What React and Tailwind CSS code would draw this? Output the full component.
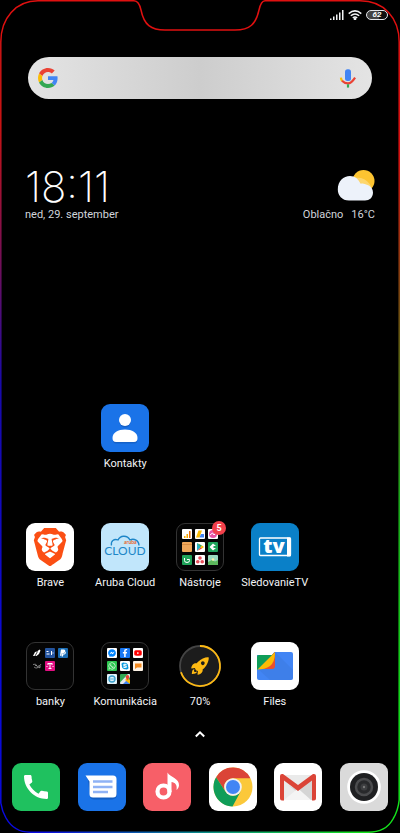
import React from "react";
import clsx from "clsx";
import { SiBrave } from "react-icons/si";
import { IoRocketSharp } from "react-icons/io5";
import { MdCall } from "react-icons/md";
import {
  FaFacebookMessenger,
  FaFacebookF,
  FaYoutube,
  FaWhatsapp,
  FaSkype,
  FaPaypal,
} from "react-icons/fa";

const svgProps = { viewBox: "0 0 48 48", className: "w-full h-full" };

function EdgeGlow() {
  return (
    <svg
      viewBox="0 0 400 833"
      preserveAspectRatio="none"
      className="absolute inset-0 w-full h-full pointer-events-none"
      fill="none"
      strokeWidth="1.5"
      aria-hidden="true"
    >
      <defs>
        <linearGradient id="edgeLeft" gradientUnits="userSpaceOnUse" x1="0" y1="0" x2="0" y2="833">
          <stop offset="0.15" stopColor="#d01414" />
          <stop offset="0.32" stopColor="#74105e" />
          <stop offset="0.46" stopColor="#1a0ab0" />
          <stop offset="0.8" stopColor="#0a0ae0" />
        </linearGradient>
        <linearGradient id="edgeRight" gradientUnits="userSpaceOnUse" x1="0" y1="0" x2="0" y2="833">
          <stop offset="0.18" stopColor="#e01010" />
          <stop offset="0.36" stopColor="#7c4a10" />
          <stop offset="0.6" stopColor="#1cae1c" />
          <stop offset="0.85" stopColor="#14e01c" />
        </linearGradient>
        <linearGradient id="edgeBottom" gradientUnits="userSpaceOnUse" x1="0" y1="0" x2="400" y2="0">
          <stop offset="0.1" stopColor="#0a0ae0" />
          <stop offset="0.5" stopColor="#0a8a8a" />
          <stop offset="0.9" stopColor="#14e01c" />
        </linearGradient>
      </defs>
      <path
        stroke="#e01010"
        d="M.8 42C.8 18 16 .8 38 .8H134Q139 1 141 10C144 25 151 30 165 30H235C250 30 256 24 259 10Q261 1 265 .8H360C384 .8 399.200 18 399.200 42"
      />
      <path stroke="url(#edgeLeft)" d="M.8 42V803Q2 811 6 818" />
      <path stroke="url(#edgeRight)" d="M399.200 42V800Q398 811 393 819" />
      <path stroke="url(#edgeBottom)" d="M6 818Q14 832.200 30 832.200H368Q386 832.200 393 819" />
    </svg>
  );
}

function StatusBar() {
  return (
    <div className="flex items-center justify-end gap-1 h-[30px] pr-3 text-gray-100">
      <svg viewBox="0 0 14 10" className="w-[14px] h-[10px]" fill="currentColor" role="img" aria-label="Signal">
        <path d="M0 8.500h1.500V10H0zM3 6.500h1.500V10H3zM6 4.500h1.500V10H6zM9 2.500h1.500V10H9zM12 0h1.500v10H12z" />
      </svg>
      <svg viewBox="0 0 14 10" className="w-[14px] h-[10px]" fill="none" stroke="currentColor" strokeWidth="1.500" role="img" aria-label="Wi-Fi">
        <path d="M.7 3.600Q7-1.800 13.300 3.600M2.800 5.800Q7 2.200 11.200 5.800M4.800 8Q7 6.200 9.200 8" />
        <circle cx="7" cy="9" r=".6" fill="currentColor" />
      </svg>
      <div className="w-[22px] h-[10px] rounded-full border border-gray-200 bg-[linear-gradient(90deg,#444_62%,#111_62%)] font-['Roboto',sans-serif] text-[8px] leading-2 font-bold italic text-center text-white">
        62
      </div>
    </div>
  );
}

function SearchBar() {
  return (
    <form
      className="mt-[27px] mx-7 h-[42px] px-[10px] rounded-full flex items-center bg-[linear-gradient(90deg,#e4e4e4,#cdcdcd_50%,#e4e4e4)]"
      onSubmit={(e) => e.preventDefault()}
    >
      <svg viewBox="0 0 48 48" className="w-5 h-5" aria-hidden="true">
        <path fill="#EA4335" d="M24 9.500c3.540 0 6.710 1.220 9.210 3.600l6.850-6.850C35.900 2.380 30.470 0 24 0 14.620 0 6.510 5.380 2.560 13.220l7.980 6.190C12.430 13.720 17.740 9.500 24 9.500z" />
        <path fill="#4285F4" d="M46.980 24.550c0-1.570-.15-3.090-.38-4.550H24v9.020h12.940c-.58 2.960-2.260 5.480-4.780 7.180l7.730 6c4.510-4.180 7.090-10.360 7.090-17.650z" />
        <path fill="#FBBC05" d="M10.530 28.590c-.48-1.450-.76-2.990-.76-4.590s.27-3.140.76-4.590l-7.980-6.190C.92 16.460 0 20.120 0 24c0 3.880.92 7.540 2.560 10.780l7.970-6.190z" />
        <path fill="#34A853" d="M24 48c6.480 0 11.930-2.130 15.890-5.810l-7.730-6c-2.150 1.450-4.920 2.300-8.160 2.300-6.260 0-11.570-4.220-13.470-9.910l-7.980 6.190C6.510 42.620 14.620 48 24 48z" />
      </svg>
      <input type="search" aria-label="Google" className="flex-1 min-w-0 bg-transparent outline-none" />
      <button type="submit" aria-label="Voice search" className="mr-1">
        <svg viewBox="0 0 24 24" className="w-5 h-5" fill="none">
          <rect x="8.400" y="1.500" width="7.200" height="14" rx="3" fill="#4285F4" />
          <path d="M3.500 11.500q.2 2.300 1.500 4" stroke="#FBBC05" strokeWidth="2.600" />
          <path d="M4.800 15.200Q8 18.500 12 18.500T20.500 11.500" stroke="#EA4335" strokeWidth="2.600" />
          <path d="M12 19.500V23.500" stroke="#34A853" strokeWidth="2.600" />
        </svg>
      </button>
    </form>
  );
}

function ClockWeather() {
  return (
    <div className="mt-[66px] mx-[25px] flex justify-between items-end">
      <div>
        <div className="font-['Inter',sans-serif] text-[42px] leading-[44px] font-extralight text-white">18:11</div>
        <div className="text-[11px] leading-3 text-gray-300">ned, 29. september</div>
      </div>
      <div className="flex flex-col items-end">
        <svg viewBox="0 0 38 32" className="w-[38px] h-8 mb-2" role="img" aria-label="Oblačno">
          <circle cx="26.500" cy="12" r="11" fill="#fdc431" />
          <path fill="#fde7a8" d="M23.500 14.500C22 11.500 20 9.500 18 8.500L24 9Q31 11 34.500 18Z" opacity=".5" />
          <path
            fill="#edf2fa"
            d="M12 31.500C5 31.500.800 26.500.800 20.500.800 12 6.500 7 13 7 18 7 21.500 10 23.500 14.500 29 14.500 36 17 36 23.500 36 28.500 32.500 31.500 28 31.500Z"
          />
        </svg>
        <div className="flex gap-2 text-[11px] leading-3 text-gray-300">
          <span>Oblačno</span>
          <span>16°C</span>
        </div>
      </div>
    </div>
  );
}

function ContactsIcon() {
  return (
    <svg {...svgProps}>
      <path fill="#0d3f8a" opacity=".35" d="M12 36H36Q37 39.500 33 39.500H15Q12 39.500 12 36ZM18 18H30Q28 23.500 24 23.500T18 18Z" />
      <circle cx="24" cy="16" r="6" fill="#fff" />
      <path fill="#fff" d="M11.500 34C11.500 28.500 17 25.500 24 25.500S36.500 28.500 36.500 34Q36.500 38 33 38H15Q11.500 38 11.500 34Z" />
    </svg>
  );
}

function ArubaIcon() {
  return (
    <svg {...svgProps}>
      <path
        fill="none"
        stroke="#1d86c8"
        strokeWidth="1.300"
        d="M10.500 22.500C9.500 18 13 15.500 17 17 19 12.500 26 11.500 29 17 33 15 38 17.500 38 22.500"
      />
      <text x="23" y="21" fontSize="5" fill="#e8622a" className="font-['Lato',sans-serif] font-bold">
        aruba
      </text>
      <text x="24" y="32" fontSize="12" textAnchor="middle" fill="#1d86c8" className="font-['Lato',sans-serif]">
        CLOUD
      </text>
    </svg>
  );
}

function TvIcon() {
  return (
    <svg {...svgProps}>
      <rect x="8.500" y="15" width="31" height="17.500" rx="1" fill="none" stroke="#fff" strokeWidth="1.300" />
      <path fill="#fff" d="M36 14.500h3q1 0 1 1v17q0 1-1 1h-3z" />
      <text x="23" y="30" fontSize="20" textAnchor="middle" fill="#fff" className="font-['Open_Sans',sans-serif] font-extrabold">
        tv
      </text>
    </svg>
  );
}

function BoosterIcon() {
  return (
    <div className="relative w-full h-full flex items-center justify-center text-[#fdb913]">
      <svg viewBox="0 0 48 48" className="absolute inset-0 w-full h-full" fill="none" strokeWidth="1.800">
        <circle cx="24" cy="24" r="20" fill="#1c1c1c" stroke="#444" />
        <path stroke="#fdb913" d="M24 4A20 20 0 1 1 5 30.200" />
      </svg>
      <IoRocketSharp className="relative w-5 h-5" />
    </div>
  );
}

function FilesIcon() {
  return (
    <svg {...svgProps}>
      <rect x="6" y="10" width="36" height="28" rx="2" fill="#4285f4" />
      <path fill="#fff" d="M5 9H24L21 13H5Z" />
      <path fill="#3a76da" d="M24 10 42 28V36Q42 38 40 38H19L7 27Z" opacity=".4" />
      <path fill="#e8502f" d="M24 10V24Q24 27 21 27H7Z" />
      <path fill="#fbbc05" d="M24 10Q24 20 19 24 14 27.500 6 27.500Z" />
      <path fill="#0f9d58" d="M8 13H21L24 10 6 28V15Q6 13 8 13Z" />
    </svg>
  );
}

function MessagesIcon() {
  return (
    <svg {...svgProps}>
      <path fill="#0d3f8a" opacity=".4" d="M10 17 12 33Q12.500 36.500 16 36.500H34Q38.500 36 39 32V20Z" />
      <path fill="#fff" d="M7.500 12.500H35Q38.500 12.500 38.500 16V31Q38.500 34.500 35 34.500H15Q11.500 34.500 11.500 31V18.500Z" />
      <path stroke="#8fb2f5" strokeWidth="2.600" d="M15 18.500H34.500M15 24H34.500M15 29H30" />
    </svg>
  );
}

function MusicIcon() {
  return (
    <svg {...svgProps}>
      <circle cx="20.500" cy="28.500" r="6" fill="none" stroke="#fff" strokeWidth="4.200" />
      <path fill="#fff" d="M24.500 9.500C27 14.500 36.500 15 36 22.500 35.800 24.500 34.500 26 33.500 27 34.500 21.500 32 19.500 28.500 19V29H24.500Z" />
    </svg>
  );
}

function ChromeIcon() {
  return (
    <svg {...svgProps}>
      <circle cx="24" cy="24" r="19.500" fill="#fbc83a" />
      <path fill="#db4437" d="M7.100 14.200A19.500 19.500 0 0 1 41.400 15.200H24A8.800 8.800 0 0 0 16.400 28.400Z" />
      <path fill="#0f9d58" d="M7.100 14.200 16.400 28.400A8.800 8.800 0 0 0 31.600 28.400L23.500 43.500A19.500 19.500 0 0 1 7.100 14.200Z" />
      <circle cx="24" cy="24" r="8.800" fill="#f1f1f1" />
      <circle cx="24" cy="24" r="7" fill="#4285f4" />
    </svg>
  );
}

function GmailIcon() {
  return (
    <svg {...svgProps}>
      <path fill="#eaeaea" d="M7 12H41V37H7Z" />
      <path fill="#d5d5d5" d="M41 14V37H33L14 22 24 27Z" />
      <path fill="#f4f4f4" d="M10 37 24 25.500 37 37Z" />
      <path fill="#db4437" d="M6 13Q6 11 8 11H9L24 22 39 11H40Q42 11 42 13V35.500Q42 37.500 40 37.500H38V17.500L24 28 10 17.500V37.500H8Q6 37.500 6 35.500Z" />
    </svg>
  );
}

function CameraIcon() {
  return (
    <svg {...svgProps}>
      <circle cx="24" cy="24" r="16.800" fill="#fff" />
      <circle cx="24" cy="24" r="14" fill="#1f2022" />
      <circle cx="24" cy="24" r="8" fill="#28292b" stroke="#4b4c4e" strokeWidth="2.500" />
      <circle cx="24" cy="24" r="3.500" fill="#3d3e40" />
      <circle cx="24" cy="24" r="1.200" fill="#777" />
    </svg>
  );
}

function Tile({ className, children }) {
  return (
    <span className={clsx("w-[10px] h-[10px] rounded-[1px] overflow-hidden flex items-center justify-center", className)}>
      {children}
    </span>
  );
}

function Glyph({ children }) {
  return (
    <svg viewBox="0 0 10 10" className="w-[10px] h-[10px]">
      {children}
    </svg>
  );
}

function Folder({ badge, children }) {
  return (
    <div className="relative w-12 h-12 rounded-[9px] border border-[#333] bg-[#050505] p-[5px] grid grid-cols-3 content-start gap-[3px]">
      {children}
      {badge && (
        <span className="absolute -top-[3px] -right-[3px] w-[14px] h-[14px] rounded-full bg-[#f2404b] text-white text-[9px] leading-[14px] font-bold text-center">
          {badge}
        </span>
      )}
    </div>
  );
}

function ToolsFolder() {
  return (
    <Folder badge={5}>
      <Tile className="bg-white">
        <Glyph>
          <path fill="#f9ab00" d="M2 7h1.500v2H2zM4.500 5H6v4H4.500z" />
          <path fill="#e8710a" d="M7 2h1.500v7H7z" />
        </Glyph>
      </Tile>
      <Tile className="bg-white">
        <Glyph>
          <path fill="#fbbc05" d="M3.500 1.500H7L4.500 8.500H1Z" />
          <path fill="#4285f4" d="M6 5H9V8.500H4.500Z" />
        </Glyph>
      </Tile>
      <Tile className="bg-white">
        <Glyph>
          <circle cx="5" cy="5" r="4" fill="#e754a6" />
          <path stroke="#fff" fill="none" d="M2 6 4.500 4 6 6 8 4" />
        </Glyph>
      </Tile>
      <Tile className="bg-[#f0a75a]">
        <Glyph>
          <path fill="#d98d43" d="M0 2h10v1H0z" />
        </Glyph>
      </Tile>
      <Tile className="bg-white">
        <Glyph>
          <path fill="#27b0c4" d="M2 1 6 5 2 9Z" />
          <path fill="#ea4335" d="M2 9 6 5 7 6.500Z" />
          <path fill="#34a853" d="M2 1 7 3.500 5.500 5Z" />
          <path fill="#fbbc05" d="M7 3.500 9 5 7 6.500 5.500 5Z" />
        </Glyph>
      </Tile>
      <Tile className="bg-[#1fa45b]">
        <Glyph>
          <path fill="#fff" d="M1.500 5 5 1.500 8 4H5.500V6H8L5 8.500Z" />
        </Glyph>
      </Tile>
      <Tile className="bg-[#20a35a]">
        <Glyph>
          <path fill="none" stroke="#fff" d="M2.500 3V5.500Q2.500 7.500 5 7.500T7.500 5.500V4.500H5" />
        </Glyph>
      </Tile>
      <Tile className="bg-white">
        <Glyph>
          <g fill="#e8505b">
            <circle cx="5" cy="3" r="1.800" />
            <circle cx="2.800" cy="6.800" r="1.800" />
            <circle cx="7.200" cy="6.800" r="1.800" />
          </g>
        </Glyph>
      </Tile>
      <Tile className="bg-[#9bdcc0]">
        <Glyph>
          <path fill="#5cb85c" d="M0 7 4 5 7 6.500 10 5V10H0Z" />
          <circle cx="5" cy="4.500" r="1.300" fill="#fff3a8" />
        </Glyph>
      </Tile>
    </Folder>
  );
}

function BanksFolder() {
  return (
    <Folder>
      <Tile>
        <Glyph>
          <path fill="#fff" d="M1 8 3 4 5 3.500 7.500 1.500 8.500 2.500 7 6 4.500 8Z" />
          <path stroke="#111" strokeWidth=".8" d="M3 8 5.500 3.500" />
        </Glyph>
      </Tile>
      <Tile className="bg-[#24549f]">
        <Glyph>
          <path fill="#fff" d="M1.500 3h2v1h-2zM1.500 5.500h3v1h-3zM6 3h1v4H6zM7.500 4.500h1v1h-1z" />
        </Glyph>
      </Tile>
      <Tile className="bg-[#1b6db5]">
        <FaPaypal className="w-2 h-2 text-white" />
      </Tile>
      <Tile>
        <Glyph>
          <path fill="none" stroke="#aaa" strokeWidth=".7" d="M1 3.500Q4 2 5 5T9 3M2 6Q4 8 6 6.500M7 4V7L9 5.500M3 4.500H5" />
        </Glyph>
      </Tile>
      <Tile className="bg-[#e20f82]">
        <Glyph>
          <path fill="#fff" d="M2.500 2h5v2h-1V3h-1v4h1v1h-3V7h1V3h-1v1h-1zM1.500 5h1v1h-1zM7.500 5h1v1h-1z" />
        </Glyph>
      </Tile>
    </Folder>
  );
}

function ChatFolder() {
  return (
    <Folder>
      <Tile className="bg-white">
        <FaFacebookMessenger className="w-2 h-2 text-[#0084ff]" />
      </Tile>
      <Tile className="bg-[#1877f2]">
        <FaFacebookF className="w-2 h-2 text-white" />
      </Tile>
      <Tile className="bg-white">
        <FaYoutube className="w-2 h-2 text-[#f00]" />
      </Tile>
      <Tile className="bg-[#2cc64f]">
        <FaWhatsapp className="w-2 h-2 text-white" />
      </Tile>
      <Tile className="bg-white">
        <FaSkype className="w-2 h-2 text-[#0a9be0]" />
      </Tile>
      <Tile className="bg-[#fdf3e6]">
        <Glyph>
          <path fill="#f58a1f" d="M2 2.500H8.500V6.500H4L2 8Z" />
        </Glyph>
      </Tile>
      <Tile className="bg-[#e2f3fa]">
        <Glyph>
          <circle cx="5" cy="5" r="3" fill="none" stroke="#3aa0cc" strokeWidth="1.400" />
          <path stroke="#3aa0cc" strokeWidth=".8" d="M3 5H7" />
        </Glyph>
      </Tile>
      <Tile className="bg-[#34a853]">
        <Glyph>
          <path fill="#4285f4" d="M5 5 10 10H0Z" />
          <path fill="#e8eaed" d="M0 8.500 8 0H10V3L3 10H0Z" />
          <path fill="#fbbc05" d="M5 6 10 10V6L7 4Z" />
          <path fill="#ea4335" d="M7.500 1A2 2 0 0 1 9 4L7.500 6.500 6 4A2 2 0 0 1 7.500 1Z" />
        </Glyph>
      </Tile>
    </Folder>
  );
}

function AppIcon({ className, children }) {
  return (
    <div className={clsx("w-12 h-12 rounded-[9px] overflow-hidden flex items-center justify-center", className)}>
      {children}
    </div>
  );
}

function Shortcut({ label, className = "", children }) {
  return (
    <button type="button" className={clsx("flex flex-col items-center gap-1 min-w-0", className)}>
      {children}
      <span className="text-[11px] leading-4 whitespace-nowrap">{label}</span>
    </button>
  );
}

const dock = [
  { name: "Telefón", bg: "bg-[#1fc15f]", icon: <MdCall className="w-8 h-8 text-white" /> },
  { name: "Správy", bg: "bg-[#1a73e8]", icon: <MessagesIcon /> },
  { name: "Hudba", bg: "bg-[#f75f68]", icon: <MusicIcon /> },
  { name: "Chrome", bg: "bg-white", icon: <ChromeIcon /> },
  { name: "Gmail", bg: "bg-white", icon: <GmailIcon /> },
  { name: "Fotoaparát", bg: "bg-[#dadada]", icon: <CameraIcon /> },
];

function App() {
  return (
    <main className="relative min-h-screen bg-black text-gray-100 font-['Roboto',sans-serif] flex flex-col overflow-hidden">
      <EdgeGlow />
      <StatusBar />
      <SearchBar />
      <ClockWeather />

      <div className="mt-auto pt-10">
        <div className="px-[13px] grid grid-cols-5 gap-y-[51px]">
          <Shortcut label="Kontakty" className="col-start-2">
            <AppIcon className="bg-[#1a73e8]">
              <ContactsIcon />
            </AppIcon>
          </Shortcut>

          <Shortcut label="Brave" className="col-start-1">
            <AppIcon className="bg-white">
              <SiBrave className="w-[38px] h-[38px] text-[#fb4f14]" />
            </AppIcon>
          </Shortcut>
          <Shortcut label="Aruba Cloud">
            <AppIcon className="bg-[#c1e6fb]">
              <ArubaIcon />
            </AppIcon>
          </Shortcut>
          <Shortcut label="Nástroje">
            <ToolsFolder />
          </Shortcut>
          <Shortcut label="SledovanieTV">
            <AppIcon className="bg-[#0a80c8]">
              <TvIcon />
            </AppIcon>
          </Shortcut>

          <Shortcut label="banky" className="col-start-1">
            <BanksFolder />
          </Shortcut>
          <Shortcut label="Komunikácia">
            <ChatFolder />
          </Shortcut>
          <Shortcut label="70%">
            <AppIcon>
              <BoosterIcon />
            </AppIcon>
          </Shortcut>
          <Shortcut label="Files">
            <AppIcon className="bg-white">
              <FilesIcon />
            </AppIcon>
          </Shortcut>
        </div>

        <button type="button" aria-label="Aplikácie" className="block mx-auto mt-5">
          <svg viewBox="0 0 10 8" className="w-[10px] h-2" fill="none" stroke="#fff" strokeWidth="2">
            <path d="M.8 6.500 5 2.300 9.200 6.500" />
          </svg>
        </button>

        <nav className="mt-[25px] mb-[22px] px-3 flex justify-between">
          {dock.map((app) => (
            <button key={app.name} type="button" aria-label={app.name}>
              <AppIcon className={app.bg}>{app.icon}</AppIcon>
            </button>
          ))}
        </nav>
      </div>
    </main>
  );
}

export default App;
